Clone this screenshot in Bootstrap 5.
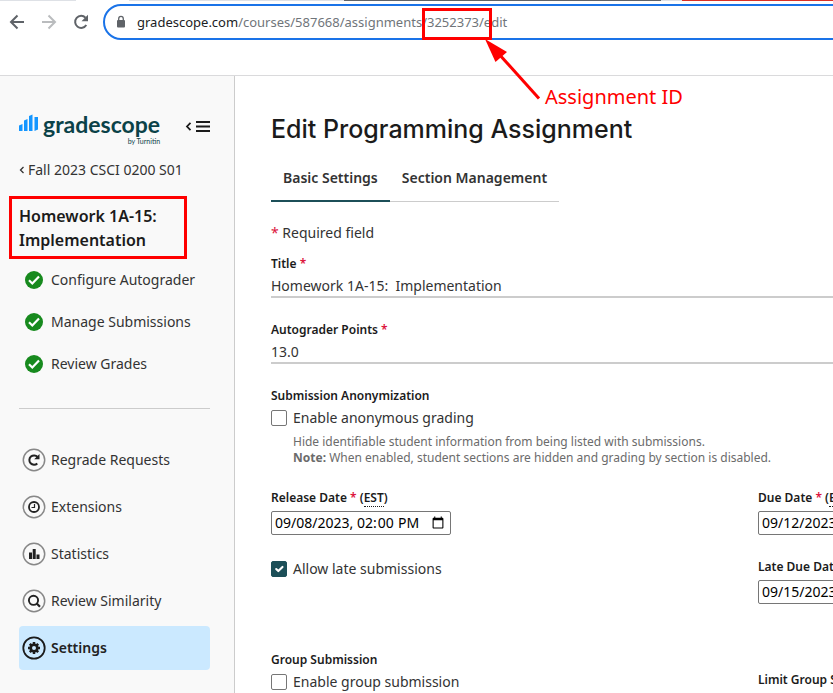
<!DOCTYPE html>
<html lang="en-US">
<head>
<meta charset="utf-8">
<meta name="viewport" content="width=device-width, initial-scale=1">
<title>Edit Programming Assignment | Gradescope</title>
<link href="https://cdn.jsdelivr.net/npm/bootstrap@5.3.0/dist/css/bootstrap.min.css" rel="stylesheet">
<style>
  body { font-family: "Noto Sans", sans-serif; font-size: 14px; line-height: 24px; color: #333; }
  a { color: inherit; text-decoration: none; }
  svg { display: block; flex: none; }

  /* browser toolbar */
  .tab-strip { height: 1px; }
  .strip-light { background: #dee1e6; }
  .strip-dark { background: #5f6368; }
  .strip-red { background: #d93025; }
  .toolbar-row { padding: 3px 0 35px 7px; border-bottom: 1px solid #dadadc; }
  .nav-btn { width: 20px; height: 20px; margin-right: 12px; padding: 0; border: 0; background: none; color: #5f6368; }
  .nav-btn:disabled { color: #babcbe; }
  .url-field { height: 36px; margin-right: -20px; padding-left: 10px; border: 2px solid #1a73e8; border-radius: 18px; font-size: 13px; }
  .url-field label { margin-left: 10px; color: #202124; }
  .url-field input { color: #70757a; }
  .plain-input { padding: 0; border: 0; background: none; outline: 0; }

  /* sidebar */
  .side-panel { width: 235px; padding: 36px 24px 0 19px; background: #f9f9f9; border-right: 1px solid #ccc; }
  .brand-name { font-family: Lato, sans-serif; font-weight: 700; font-size: 23px; line-height: 24px; color: #0b4248; }
  .brand-by { font-family: Lato, sans-serif; font-size: 7px; line-height: 10px; color: #0b4248; text-align: right; }
  .course-link { margin-top: 12px; }
  .task-name { font-size: 16px; font-weight: 600; color: #1b1b1b; margin: 22px 0 0; line-height: 24px; }
  .task-list { padding-top: 7px; }
  .task-link { height: 42px; padding-left: 6px; gap: 8px; }
  .side-rule { height: 1px; background: #ccc; margin: 23px 0 29px; }
  .tool-list { gap: 3px; }
  .tool-link { height: 44px; padding-left: 3px; gap: 5px; border-radius: 4px; }
  .tool-link.current { background: #cbe9ff; font-weight: 600; color: #222; }

  /* form */
  .main-panel { padding: 33px 0 0 36px; min-width: 0; }
  .page-heading { font-family: Inter, sans-serif; font-size: 25px; line-height: 40px; font-weight: 500; color: #1b1b1b; margin: 0; }
  .section-tabs { margin-top: 5px; }
  .section-tabs a { height: 48px; padding: 0 12px; font-weight: 600; border-bottom: 1px solid #ccc; }
  .section-tabs a.current { padding-top: 1px; border-bottom: 2px solid #1c4f58; }
  .wide-form { min-width: 974px; }
  .req { color: #dc143c; }
  .required-note { margin: 19px 0 9px; }
  .field-label { display: block; font-size: 12px; line-height: 20px; font-weight: 600; color: #1b1b1b; }
  .field-label abbr { text-decoration: none; border-bottom: 1px dotted #1b1b1b; }
  .line-input { display: block; width: 100%; height: 24px; margin: 0 0 22px; padding: 2px 0 0; border: 0; border-bottom: 2px solid #ccc; color: #333; }
  .check-row { gap: 6px; }
  .check-row .form-check-input { width: 16px; height: 16px; margin: 0; border: 1px solid #767676; border-radius: 2px; }
  .check-row .form-check-input:checked { background-color: #1c4f58; border-color: #1c4f58; }
  .hint { margin: 4px 0 22px 22px; font-size: 12px; line-height: 16px; color: #6b6b6b; }
  .date-input { display: block; width: 180px; height: 24px; margin: 3px 0 22px; padding: 0 3px; border: 1px solid #767676; border-radius: 2px; color: #000; }
  .group-row { margin-top: 24px; }
  .limit-field { padding-top: 20px; }

  /* annotations laid over the window */
  .callout { position: absolute; border: 3px solid #f00; pointer-events: none; }
  .callout-id { left: 422px; top: 8px; width: 70px; height: 32px; }
  .callout-task { left: -10px; right: 23px; top: -8px; bottom: -7px; }
  .callout-arrow { position: absolute; left: 480px; top: 36px; }
  .callout-text { position: absolute; left: 545px; top: 82px; font-size: 20px; line-height: 30px; color: #f00; white-space: nowrap; }
</style>
<script src="https://cdn.jsdelivr.net/npm/bootstrap@5.3.0/dist/js/bootstrap.bundle.min.js"></script>
</head>
<body class="vh-100 overflow-hidden position-relative d-flex flex-column bg-white">

<header>
  <div class="tab-strip d-flex">
    <div class="strip-light" style="width:9.1%"></div>
    <div style="width:6.4%"></div>
    <div class="strip-light" style="width:25.8%"></div>
    <div class="strip-dark" style="width:38%"></div>
    <div class="strip-light" style="width:2.6%"></div>
    <div class="strip-red flex-grow-1"></div>
  </div>
  <div class="toolbar-row d-flex align-items-center overflow-hidden">
    <button class="nav-btn" type="button" aria-label="Back"><svg width="20" height="20" viewBox="0 0 20 20" fill="none" stroke="currentColor" stroke-width="2"><path d="M17 10H4.500M10.500 3.500 4 10l6.500 6.500"/></svg></button>
    <button class="nav-btn" type="button" aria-label="Forward" disabled><svg width="20" height="20" viewBox="0 0 20 20" fill="none" stroke="currentColor" stroke-width="2"><path d="M3 10h12.500M9.500 3.500 16 10l-6.500 6.500"/></svg></button>
    <button class="nav-btn" type="button" aria-label="Reload"><svg width="20" height="20" viewBox="0 0 20 20"><path fill="none" stroke="currentColor" stroke-width="2" d="M15.300 13A6 6 0 1 1 14.500 5.700"/><path fill="currentColor" d="M17 2.800V9.300H10.500z"/></svg></button>
    <div class="url-field d-flex align-items-center flex-grow-1">
      <svg width="12" height="14" viewBox="0 0 12 14"><rect x="2" y="5" width="8" height="7.500" rx="1" fill="#5f6368"/><path d="M3.700 6V3.700a2.300 2.300 0 0 1 4.600 0V6" fill="none" stroke="#5f6368" stroke-width="1.300"/></svg>
      <label for="url">gradescope.com</label><input id="url" class="plain-input flex-grow-1" type="text" value="/courses/587668/assignments/3252373/edit">
    </div>
  </div>
</header>

<div class="d-flex flex-grow-1 overflow-hidden">
  <nav class="side-panel flex-shrink-0">
    <div class="d-flex justify-content-between">
      <a href="#" class="d-flex gap-1" aria-label="Gradescope home">
        <svg width="20" height="20" viewBox="0 0 20 20" fill="#1496ff"><path d="M0 13.500 3.500 12V19H0zM5 8.500 8.500 7V19H5zM10 4 13.500 2.500V19H10zM15.500 5H19V17.500L15.500 19z"/></svg>
        <span><span class="brand-name d-block">gradescope</span><span class="brand-by d-block">by Turnitin</span></span>
      </a>
      <button type="button" class="plain-input align-self-start mt-2" aria-label="Collapse menu"><svg width="25" height="14" viewBox="0 0 25 14" fill="none" stroke="#1b1b1b"><path stroke-width="1.800" d="M5.500 2.800 2 6.500l3.500 3.700"/><path stroke-width="2" d="M11 2h14M11 6.500h14M11 11h14"/></svg></button>
    </div>
    <a href="#" class="course-link d-flex align-items-center"><svg width="9" height="12" viewBox="0 0 9 12" fill="none" stroke="#333" stroke-width="1.300"><path d="M4.500 3 1.500 6l3 3"/></svg>Fall 2023 CSCI 0200 S01</a>
    <div class="position-relative">
      <h2 class="task-name">Homework 1A-15:<br>Implementation</h2>
      <div class="callout callout-task"></div>
    </div>
    <div class="task-list">
      <a href="#" class="task-link d-flex align-items-center"><svg width="18" height="18" viewBox="0 0 18 18"><circle cx="9" cy="9" r="9" fill="#178a1e"/><path d="m4 9.300 3.300 3.200L14 5.500" fill="none" stroke="#fff" stroke-width="2.200"/></svg>Configure Autograder</a>
      <a href="#" class="task-link d-flex align-items-center"><svg width="18" height="18" viewBox="0 0 18 18"><circle cx="9" cy="9" r="9" fill="#178a1e"/><path d="m4 9.300 3.300 3.200L14 5.500" fill="none" stroke="#fff" stroke-width="2.200"/></svg>Manage Submissions</a>
      <a href="#" class="task-link d-flex align-items-center"><svg width="18" height="18" viewBox="0 0 18 18"><circle cx="9" cy="9" r="9" fill="#178a1e"/><path d="m4 9.300 3.300 3.200L14 5.500" fill="none" stroke="#fff" stroke-width="2.200"/></svg>Review Grades</a>
    </div>
    <div class="side-rule"></div>
    <div class="tool-list d-flex flex-column">
      <a href="#" class="tool-link d-flex align-items-center"><svg width="24" height="24" viewBox="0 0 24 24" fill="none"><circle cx="12" cy="12" r="10.700" stroke="#888" stroke-width="1.500"/><path d="M15.300 15.500A4.700 4.700 0 1 1 15.600 9" stroke="#222" stroke-width="2"/><path d="M17.500 6v5.300h-5.300z" fill="#222"/></svg>Regrade Requests</a>
      <a href="#" class="tool-link d-flex align-items-center"><svg width="24" height="24" viewBox="0 0 24 24" fill="none"><circle cx="12" cy="12" r="10.700" stroke="#888" stroke-width="1.500"/><circle cx="12" cy="12" r="5" stroke="#222" stroke-width="1.800"/><path d="M12.500 9v3.500h-3" stroke="#222" stroke-width="1.200"/></svg>Extensions</a>
      <a href="#" class="tool-link d-flex align-items-center"><svg width="24" height="24" viewBox="0 0 24 24" fill="none"><circle cx="12" cy="12" r="10.700" stroke="#888" stroke-width="1.500"/><path d="M7 10.500h3V17H7zM10.700 7h3v10h-3zM14.500 12.500h3V17h-3z" fill="#222"/></svg>Statistics</a>
      <a href="#" class="tool-link d-flex align-items-center"><svg width="24" height="24" viewBox="0 0 24 24" fill="none"><circle cx="12" cy="12" r="10.700" stroke="#888" stroke-width="1.500"/><circle cx="11.500" cy="11.300" r="4.600" stroke="#222" stroke-width="1.900"/><path d="m14.700 14.500 3.300 3.300" stroke="#222" stroke-width="2.200"/></svg>Review Similarity</a>
      <a href="#" class="tool-link current d-flex align-items-center" aria-current="page"><svg width="24" height="24" viewBox="0 0 24 24" fill="none"><circle cx="12" cy="12" r="10.700" stroke="#1b1b1b" stroke-width="1.800"/><circle cx="12" cy="12" r="3.300" stroke="#1b1b1b" stroke-width="2.600"/><path d="M12 6v2.500M12 15.500V18M6 12h2.500M15.500 12H18M7.800 7.800l1.700 1.700M14.500 14.500l1.700 1.700M7.800 16.200l1.700-1.700M14.500 9.500l1.700-1.700" stroke="#1b1b1b" stroke-width="2.500"/></svg>Settings</a>
    </div>
  </nav>

  <main class="main-panel flex-grow-1 overflow-hidden">
    <h1 class="page-heading">Edit Programming Assignment</h1>
    <nav class="section-tabs d-flex">
      <a href="#" class="current d-flex align-items-center" aria-current="page">Basic Settings</a>
      <a href="#" class="d-flex align-items-center">Section Management</a>
    </nav>
    <form class="wide-form">
      <p class="required-note"><span class="req">*</span> Required field</p>
      <label class="field-label" for="title">Title <span class="req">*</span></label>
      <input class="line-input" id="title" type="text" value="Homework 1A-15:  Implementation">
      <label class="field-label" for="points">Autograder Points <span class="req">*</span></label>
      <input class="line-input" id="points" type="text" value="13.0">
      <div class="field-label">Submission Anonymization</div>
      <div class="check-row d-flex align-items-center">
        <input class="form-check-input" type="checkbox" id="anon"><label for="anon">Enable anonymous grading</label>
      </div>
      <p class="hint">Hide identifiable student information from being listed with submissions.<br><strong>Note:</strong> When enabled, student sections are hidden and grading by section is disabled.</p>
      <div class="row g-0">
        <div class="col-6">
          <label class="field-label" for="release">Release Date <span class="req">*</span> (<abbr>EST</abbr>)</label>
          <input class="date-input" id="release" type="datetime-local" value="2023-09-08T14:00">
          <div class="check-row d-flex align-items-center">
            <input class="form-check-input" type="checkbox" id="late" checked><label for="late">Allow late submissions</label>
          </div>
        </div>
        <div class="col-6">
          <label class="field-label" for="due">Due Date <span class="req">*</span> (<abbr>EST</abbr>)</label>
          <input class="date-input" id="due" type="datetime-local" value="2023-09-12T14:00">
          <label class="field-label" for="latedue">Late Due Date (<abbr>EST</abbr>)</label>
          <input class="date-input" id="latedue" type="datetime-local" value="2023-09-15T14:00">
        </div>
      </div>
      <div class="group-row row g-0">
        <div class="col-6">
          <div class="field-label">Group Submission</div>
          <div class="check-row d-flex align-items-center">
            <input class="form-check-input" type="checkbox" id="group"><label for="group">Enable group submission</label>
          </div>
        </div>
        <div class="col-6 limit-field"><div class="field-label">Limit Group Size</div></div>
      </div>
    </form>
  </main>
</div>

<div class="callout callout-id"></div>
<svg class="callout-arrow" width="64" height="66" viewBox="0 0 64 66"><path d="M59 62.500 18 17" stroke="#f00" stroke-width="3"/><path d="M5 3 27 16 15.500 26z" fill="#f00"/></svg>
<div class="callout-text">Assignment ID</div>
</body>
</html>
